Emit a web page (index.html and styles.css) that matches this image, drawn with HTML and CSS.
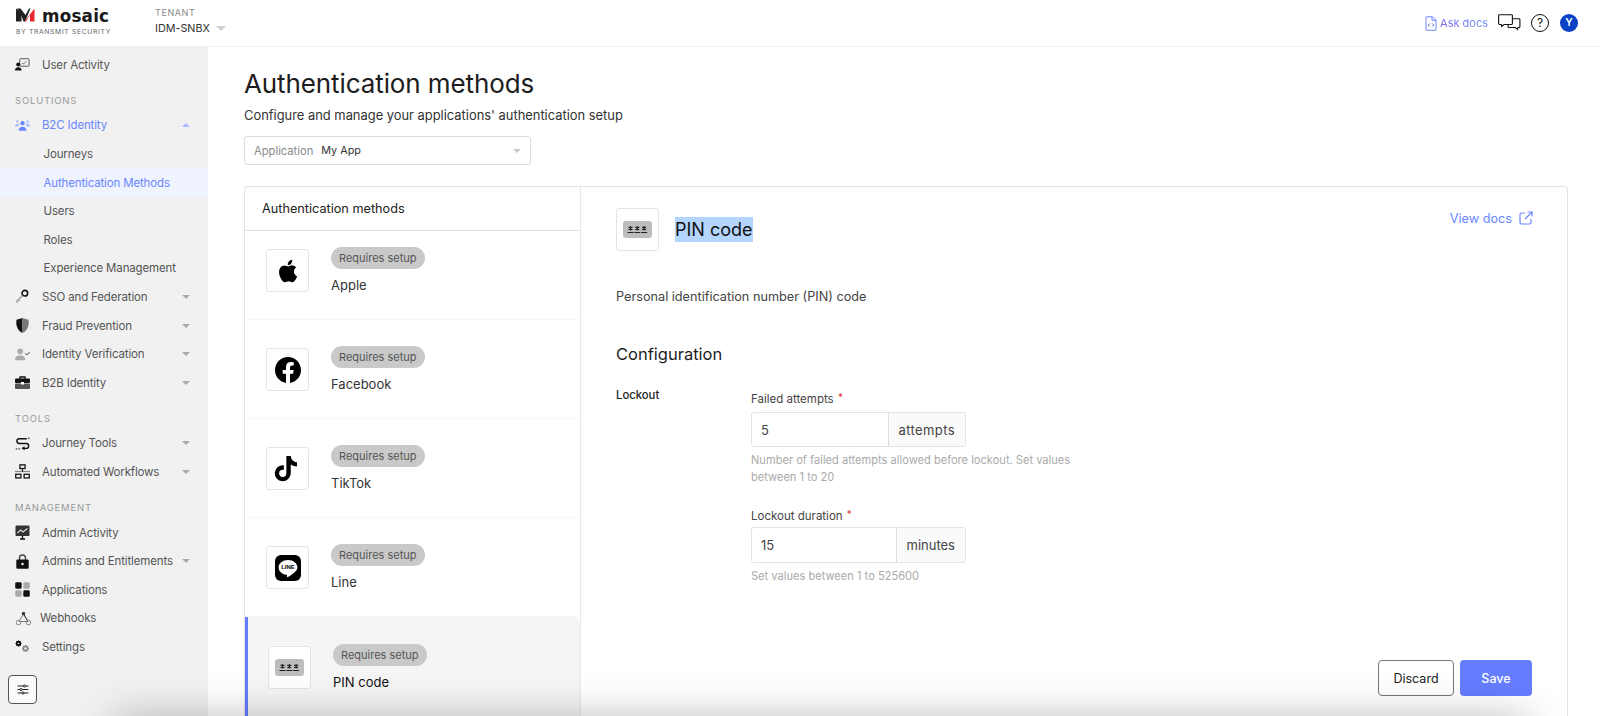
FILE: index.html
```html
<!DOCTYPE html>
<html lang="en">
<head>
<meta charset="utf-8">
<title>Authentication methods</title>
<link rel="stylesheet" href="styles.css">
</head>
<body>
<header class="topbar">
  <div class="brand">
    <svg class="brand-mark" viewBox="0 0 19 14"><path d="M0 .5l5.500 4.500v8.500H0z" fill="#222"/><path d="M1 .5h3.500l5 6.500 3.500-6.500h1.500L9 13.500H7.500L5.500 8z" fill="#222"/><path d="M18.500.5v13h-4.500V7l-4 6.500H8.500z" fill="#e8262d"/></svg>
    <div class="brand-text"><div class="brand-name">mosaic</div><div class="brand-sub">BY TRANSMIT SECURITY</div></div>
  </div>
  <div class="tenant"><div class="tenant-label">TENANT</div><div class="tenant-value">IDM-SNBX <span class="caret caret-tenant"></span></div></div>
  <div class="top-actions">
    <a class="ask"><svg class="ask-icon" viewBox="0 0 12 15"><path d="M1.500.8h6L11 4.300v9a1 1 0 0 1-1 1H2a1 1 0 0 1-1-1v-12z" fill="none" stroke="#6a86ff" stroke-width="1"/><path d="M7 .8v3.500h4" fill="none" stroke="#6a86ff"/><path d="M4.700 7.500L3.200 9l1.500 1.500M7.300 7.500L8.800 9l-1.500 1.500" fill="none" stroke="#4a5cd8" stroke-width=".9"/></svg><span class="ask-text">Ask docs</span></a>
    <svg class="chat-icon" viewBox="0 0 23 18"><path d="M1.500.7h12a.9.9 0 0 1 .9.9v8a.9.9 0 0 1-.9.9H6l-2.200 2-.5-2H1.500a.9.9 0 0 1-.9-.9v-8a.9.9 0 0 1 .9-.9z" fill="#fff" stroke="#111" stroke-width="1.100"/><path d="M15 4.700h6a.9.9 0 0 1 .9.9v7a.9.9 0 0 1-.9.9h-1l-.4 2-2.300-2H11a.9.9 0 0 1-.9-.9v-2" fill="none" stroke="#111" stroke-width="1.100"/></svg>
    <div class="help">?</div>
    <div class="avatar">Y</div>
  </div>
</header>
<div class="shell">
  <nav class="sidebar">
    <a class="nav-row"><span class="ni"><svg viewBox="0 0 16 14"><rect x="5" y=".8" width="10" height="8" rx=".8" fill="none" stroke="#444" stroke-width=".9"/><path d="M7.500 5.500l1.500 1 3-3" fill="none" stroke="#444" stroke-width=".8"/><circle cx="3.500" cy="7" r="2.200" fill="#111"/><path d="M0 13.500c0-2.500 1.500-3.500 3.500-3.500s3.500 1 3.500 3.500z" fill="#111"/></svg></span>User Activity</a>
    <div class="nav-head nav-head-first">SOLUTIONS</div>
    <a class="nav-row nav-active"><span class="ni"><svg viewBox="0 0 16 12"><g fill="#6a86ff"><circle cx="8" cy="3.500" r="2.300"/><path d="M3.800 11.500c0-3 1.800-4.300 4.200-4.300s4.200 1.300 4.200 4.300z"/></g><g fill="#a9b8ff"><circle cx="2.600" cy="1.800" r="1.300"/><circle cx="13.400" cy="1.800" r="1.300"/><path d="M0 7c0-1.800 1-2.800 2.600-2.800 1 0 1.700.3 2.100 1L3.200 7zM16 7c0-1.800-1-2.800-2.600-2.800-1 0-1.700.3-2.100 1L12.800 7z"/></g></svg></span>B2C Identity<span class="caret caret-up"></span></a>
    <a class="nav-sub">Journeys</a>
    <a class="nav-sub nav-sub-active">Authentication Methods</a>
    <a class="nav-sub">Users</a>
    <a class="nav-sub">Roles</a>
    <a class="nav-sub">Experience Management</a>
    <a class="nav-row"><span class="ni"><svg viewBox="0 0 16 16"><circle cx="10.500" cy="4.500" r="3" fill="none" stroke="#111" stroke-width="1.700"/><path d="M8 7L1.500 13.500M3.500 11.500l1.500 1.500M1.500 13.500l1.200 1.200" fill="none" stroke="#aaa" stroke-width="1.700"/></svg></span>SSO and Federation<span class="caret"></span></a>
    <a class="nav-row"><span class="ni"><svg viewBox="0 0 14 15"><path d="M7 0L1 1.800C.2 7 1.500 12.500 7 15z" fill="#111"/><path d="M7 0l6 1.800C13.800 7 12.500 12.500 7 15z" fill="#777"/></svg></span>Fraud Prevention<span class="caret"></span></a>
    <a class="nav-row"><span class="ni"><svg viewBox="0 0 16 13"><circle cx="5.500" cy="3.200" r="3" fill="#aaa"/><path d="M0 12.500c0-3.500 2.500-5 5.500-5s5.500 1.500 5.500 5z" fill="#aaa"/><path d="M11 5.500l1.500 1.500L15.500 4" fill="none" stroke="#222" stroke-width="1"/></svg></span>Identity Verification<span class="caret"></span></a>
    <a class="nav-row"><span class="ni"><svg viewBox="0 0 15 13"><path d="M5 3V1h5v2" fill="none" stroke="#111" stroke-width="1.300"/><rect x="0" y="2.500" width="15" height="4.500" rx="1" fill="#111"/><rect x="0" y="7.500" width="15" height="5.500" rx="1" fill="#555"/><rect x="6" y="6" width="3" height="2.500" fill="#fff"/></svg></span>B2B Identity<span class="caret"></span></a>
    <div class="nav-head">TOOLS</div>
    <a class="nav-row"><span class="ni"><svg viewBox="0 0 14 13"><path d="M11 2H4a2.200 2.200 0 0 0 0 4.500h6.500a2.200 2.200 0 0 1 0 4.500H7" fill="none" stroke="#111" stroke-width="1.300"/><path d="M9 9.500L7 11l2 1.500" fill="none" stroke="#111" stroke-width="1"/><circle cx="12.800" cy="1.500" r="1" fill="#888"/><circle cx="1.500" cy="11.500" r="1" fill="#888"/><circle cx="4" cy="11.500" r="1" fill="#888"/></svg></span>Journey Tools<span class="caret"></span></a>
    <a class="nav-row"><span class="ni"><svg viewBox="0 0 14 14"><g fill="none" stroke="#111" stroke-width="1.200"><rect x="4.600" y=".8" width="4.800" height="3.400"/><rect x=".7" y="9.600" width="4.800" height="3.400"/><rect x="8.500" y="9.600" width="4.800" height="3.400"/></g><path d="M0 7h14" stroke="#888" stroke-width="1.200"/><path d="M7 4.200v3" stroke="#111"/></svg></span>Automated Workflows<span class="caret"></span></a>
    <div class="nav-head">MANAGEMENT</div>
    <a class="nav-row"><span class="ni"><svg viewBox="0 0 15 15"><rect x=".5" y=".5" width="14" height="10.500" rx="1" fill="#333"/><path d="M2.500 8l3-3 2.500 2 4.500-3.500" fill="none" stroke="#ddd" stroke-width="1.100"/><path d="M5 14h5M7.500 11v3" stroke="#111" stroke-width="1.300"/></svg></span>Admin Activity</a>
    <a class="nav-row"><span class="ni"><svg viewBox="0 0 13 15"><path d="M3.500 6.500V4a3 3 0 0 1 6 0v2.500" fill="none" stroke="#444" stroke-width="1.400"/><rect x=".3" y="5.500" width="12.400" height="9.200" rx="1.300" fill="#111"/><circle cx="6.500" cy="10" r="1.200" fill="#fff"/></svg></span>Admins and Entitlements<span class="caret"></span></a>
    <a class="nav-row"><span class="ni"><svg viewBox="0 0 13 13"><rect x=".2" y=".2" width="5.600" height="5.600" rx="1.200" fill="#111"/><rect x="7.200" y=".2" width="5.600" height="5.600" rx="1" fill="#aaa"/><rect x=".2" y="7.200" width="5.600" height="5.600" rx="1" fill="#aaa"/><rect x="7.200" y="7.200" width="5.600" height="5.600" rx="1.200" fill="#111"/></svg></span>Applications</a>
    <a class="nav-row nav-webhooks"><span class="ni ni-wide"><svg viewBox="0 0 16 15"><path d="M8 3L3.500 10.500h9" fill="none" stroke="#777" stroke-width="1"/><path d="M8 3l4.500 7.500" fill="none" stroke="#111" stroke-width="1"/><circle cx="8" cy="2.500" r="1.700" fill="#333"/><circle cx="3" cy="11.500" r="2.300" fill="none" stroke="#888"/><circle cx="13" cy="11.500" r="2.300" fill="none" stroke="#888"/></svg></span>Webhooks</a>
    <a class="nav-row"><span class="ni"><svg viewBox="0 0 15 12"><circle cx="3.500" cy="3" r="1.700" fill="#fff" stroke="#111" stroke-width="1.900"/><g stroke="#111" stroke-width="1.200"><path d="M3.500 0v6M.5 3h6M1.400 .9l4.200 4.200M5.600 .9L1.400 5.100"/></g><circle cx="3.500" cy="3" r=".8" fill="#f1f1f1"/><circle cx="10.500" cy="8" r="2.100" fill="none" stroke="#888" stroke-width="1.700"/><g stroke="#888" stroke-width="1.100"><path d="M10.500 4.500v7M7 8h7M8 5.500l5 5M13 5.500l-5 5"/></g><circle cx="10.500" cy="8" r="1.200" fill="#f1f1f1"/></svg></span>Settings</a>
    <button class="tune" type="button" aria-label="Preferences"><svg viewBox="0 0 12 11"><g stroke="#222" stroke-width="1" fill="none"><path d="M.5 2h11M.5 5.500h11M.5 9h11"/></g><g fill="#fff" stroke="#222" stroke-width="1"><circle cx="7.500" cy="2" r="1.100"/><circle cx="4" cy="5.500" r="1.100"/><circle cx="6" cy="9" r="1.100"/></g></svg></button>
  </nav>
  <main class="main">
    <h1 class="page-title">Authentication methods</h1>
    <p class="page-sub">Configure and manage your applications' authentication setup</p>
    <div class="app-select"><span class="app-label">Application</span><span class="app-value">My App</span><span class="caret caret-select"></span></div>
    <section class="card">
      <aside class="methods">
        <div class="methods-head">Authentication methods</div>
        <div class="method method-first">
          <div class="icon-box"><svg class="logo-apple" viewBox="0 0 24 24"><path fill="#000" d="M17.050 12.500c0-2.300 1.900-3.400 2-3.500-1.100-1.600-2.800-1.800-3.400-1.800-1.400-.2-2.800.9-3.500.9s-1.900-.8-3.100-.8c-1.600 0-3.100.9-3.900 2.400-1.700 2.900-.4 7.200 1.200 9.500.8 1.200 1.800 2.400 3 2.400 1.200-.1 1.700-.8 3.100-.8s1.900.8 3.200.8c1.300 0 2.100-1.200 2.900-2.300.9-1.300 1.300-2.600 1.300-2.700 0-.1-2.700-1-2.800-4.100zM14.700 5.500c.7-.8 1.100-1.900 1-3.100-1 0-2.200.7-2.900 1.500-.6.700-1.200 1.900-1 3 1.100.1 2.200-.6 2.900-1.400z"/></svg></div>
          <div class="method-text"><span class="badge">Requires setup</span><div class="method-name">Apple</div></div>
        </div>
        <div class="method">
          <div class="icon-box"><svg class="logo-26" viewBox="0 0 24 24"><path fill="#000" d="M24 12.070C24 5.400 18.630 0 12 0S0 5.400 0 12.070c0 6.030 4.390 11.020 10.130 11.930v-8.440H7.080v-3.490h3.050V9.410c0-3.020 1.790-4.690 4.530-4.690 1.310 0 2.680.24 2.680.24v2.960h-1.510c-1.490 0-1.960.93-1.960 1.880v2.270h3.330l-.53 3.490h-2.800V24C19.610 23.090 24 18.100 24 12.070z"/></svg></div>
          <div class="method-text"><span class="badge">Requires setup</span><div class="method-name">Facebook</div></div>
        </div>
        <div class="method">
          <div class="icon-box"><svg class="logo-tiktok" viewBox="0 0 24 24"><path fill="#000" d="M19.300 6.500a5.200 5.200 0 0 1-3-1A5.200 5.200 0 0 1 14.200 1.500h-3.500v13.900a2.900 2.900 0 1 1-2.900-2.900c.3 0 .6 0 .9.100V9a6.400 6.400 0 1 0 5.500 6.400V8.300a8.600 8.600 0 0 0 5 1.600V6.500z"/></svg></div>
          <div class="method-text"><span class="badge">Requires setup</span><div class="method-name">TikTok</div></div>
        </div>
        <div class="method">
          <div class="icon-box"><svg class="logo-26" viewBox="0 0 26 26"><rect width="26" height="26" rx="6" fill="#000"/><path fill="#fff" d="M13 5c-5.200 0-9.400 3.300-9.400 7.400 0 3.700 3.300 6.800 7.800 7.300.9.200.7.700.5 1.800 0 .4-.2 1 .8.600 1.200-.5 5.700-3.400 7.400-5.400 1.500-1.400 2.300-2.800 2.300-4.300C22.400 8.300 18.200 5 13 5z"/><text class="line-text" x="13" y="14.400">LINE</text></svg></div>
          <div class="method-text"><span class="badge">Requires setup</span><div class="method-name">Line</div></div>
        </div>
        <div class="method method-active">
          <div class="icon-box"><svg class="pin-icon" viewBox="0 0 29 17"><rect width="29" height="17" rx="3" fill="#bdbdbd"/><g stroke="#222" fill="none"><path d="M4.500 11.500h6M11.300 11.500h6M18.100 11.500h6" stroke-width="1.100"/><path d="M7.500 5v4.500M5.500 6l4 2.500M9.500 6l-4 2.500M14.300 5v4.500M12.300 6l4 2.500M16.300 6l-4 2.500M21.100 5v4.500M19.100 6l4 2.500M23.100 6l-4 2.500" stroke-width="1.100"/></g></svg></div>
          <div class="method-text"><span class="badge">Requires setup</span><div class="method-name">PIN code</div></div>
        </div>
      </aside>
      <div class="detail">
        <div class="detail-head">
          <div class="icon-box"><svg class="pin-icon" viewBox="0 0 29 17"><rect width="29" height="17" rx="3" fill="#bdbdbd"/><g stroke="#222" fill="none"><path d="M4.500 11.500h6M11.300 11.500h6M18.100 11.500h6" stroke-width="1.100"/><path d="M7.500 5v4.500M5.500 6l4 2.500M9.500 6l-4 2.500M14.300 5v4.500M12.300 6l4 2.500M16.300 6l-4 2.500M21.100 5v4.500M19.100 6l4 2.500M23.100 6l-4 2.500" stroke-width="1.100"/></g></svg></div>
          <h2 class="detail-title"><span class="selected">PIN code</span></h2>
          <a class="view-docs">View docs<svg class="ext-icon" viewBox="0 0 14 14"><path d="M6 2H2.500A1.500 1.500 0 0 0 1 3.500v8A1.500 1.500 0 0 0 2.500 13h8a1.500 1.500 0 0 0 1.500-1.500V8M6 8l7-7M8.500 1H13v4.500" fill="none" stroke="#6a86ff" stroke-width="1.200"/></svg></a>
        </div>
        <p class="detail-desc">Personal identification number (PIN) code</p>
        <h3 class="config-title">Configuration</h3>
        <div class="config-row">
          <div class="config-label">Lockout</div>
          <div class="fields">
            <div class="field">
              <label class="field-label">Failed attempts <span class="req">*</span></label>
              <div class="input-group"><span class="input-value">5</span><span class="addon addon-wide">attempts</span></div>
              <p class="hint">Number of failed attempts allowed before lockout. Set values between 1 to 20</p>
            </div>
            <div class="field field-second">
              <label class="field-label">Lockout duration <span class="req">*</span></label>
              <div class="input-group"><span class="input-value">15</span><span class="addon">minutes</span></div>
              <p class="hint">Set values between 1 to 525600</p>
            </div>
          </div>
        </div>
        <div class="actions"><button class="btn btn-ghost" type="button">Discard</button><button class="btn btn-primary" type="button">Save</button></div>
      </div>
    </section>
  </main>
</div>
<div class="bottom-fade"><div class="bottom-fade-box"></div></div>
</body>
</html>
```
FILE: styles.css
```css
* { box-sizing: border-box; }
html, body { margin: 0; height: 716px; overflow: hidden; }
body { font-family: Inter, "Noto Sans", sans-serif; color: #222; background: #fff; position: relative; }
a { display: flex; align-items: center; }
p, h1, h2, h3 { margin: 0; font-weight: 400; }

.topbar { height: 47px; display: flex; align-items: center; border-bottom: 1px solid #efefef; padding-left: 16px; background: #fff; }
.brand { display: flex; align-items: flex-start; width: 139px; margin-top: -3px; position: relative; }
.brand-mark { width: 19px; height: 14px; position: absolute; left: 0; top: 0; }
.brand-text { width: 95px; }
.brand-name { font-family: "DejaVu Sans", sans-serif; font-weight: 700; font-size: 16.800px; line-height: 16px; margin-left: 26px; color: #1a1a1a; letter-spacing: .2px; }
.brand-sub { font-size: 6.800px; line-height: 9px; margin-top: 3px; color: #666; letter-spacing: .65px; white-space: nowrap; font-weight: 400; }
.tenant { margin-top: -3px; }
.tenant-label { font-size: 9px; line-height: 11px; color: #8a8a8a; letter-spacing: .6px; }
.tenant-value { font-size: 10.800px; line-height: 17px; margin-top: 2px; color: #333; display: flex; align-items: center; }
.caret { display: inline-block; width: 0; height: 0; border-left: 4px solid transparent; border-right: 4px solid transparent; border-top: 4px solid #aaa; margin-left: auto; }
.caret-tenant { margin-left: 6px; border-left-width: 5px; border-right-width: 5px; border-top-width: 5px; border-top-color: #d0d0d0; }
.caret-up { border-top: 0; border-bottom: 4px solid #a9b8ff; }
.caret-select { border-top-color: #c8c8c8; }
.top-actions { margin-left: auto; display: flex; align-items: center; padding-right: 22px; }
.ask { font-size: 11px; color: #6a86ff; gap: 3px; margin-right: 10px; }
.ask-text { background: linear-gradient(90deg, #7a62ee, #6a92ff); -webkit-background-clip: text; background-clip: text; color: transparent; }
.ask-icon { width: 12px; height: 15px; }
.chat-icon { width: 23px; height: 18px; margin-right: 10px; }
.help { width: 18px; height: 18px; border: 1.200px solid #111; border-radius: 50%; font-size: 12px; line-height: 16px; text-align: center; color: #111; margin-right: 11px; }
.avatar { width: 18px; height: 18px; border-radius: 50%; background: #0a41c4; color: #fff; font-size: 10.500px; font-weight: 600; line-height: 18px; text-align: center; }

.shell { display: flex; height: 669px; overflow: hidden; }
.sidebar { width: 208px; background: #f1f1f1; padding: 3.500px 18px 0 15px; flex: none; }
.nav-row { height: 28.600px; font-size: 11.500px; letter-spacing: -.15px; color: #555; white-space: nowrap; }
.ni { width: 27px; flex: none; display: flex; align-items: center; }
.ni svg { width: 15px; height: 15px; }
.ni-wide { width: 25px; }
.ni-wide svg { width: 17px; }
.nav-active { color: #6a86ff; }
.nav-head { font-size: 9.500px; line-height: 12px; color: #9a9a9a; letter-spacing: .8px; margin: 16px 0 0; height: 16px; }
.nav-head-first { margin-top: 16px; height: 16px; }
.nav-sub { height: 28.600px; font-size: 11.500px; letter-spacing: -.15px; color: #555; margin: 0 -18px 0 -15px; padding-left: 43.500px; }
.nav-sub-active { color: #6a86ff; background: #eff3fe; }
.tune { display: flex; align-items: center; justify-content: center; width: 29px; height: 29px; margin: 13.500px 0 0 -7px; padding: 0; border: 1px solid #555; border-radius: 4px; background: #fafafa; }
.tune svg { width: 12px; height: 11px; }

.main { flex: 1; padding: 22px 32px 0 36px; min-width: 0; }
.page-title { font-size: 26px; line-height: 30px; color: #1d1d1d; letter-spacing: -.1px; }
.page-sub { font-size: 12.900px; line-height: 18px; margin-top: 8px; color: #333; }
.app-select { width: 287px; height: 29px; margin-top: 11px; border: 1px solid #dedede; border-radius: 3px; display: flex; align-items: center; padding: 0 9px; font-size: 11.200px; }
.app-label { color: #8a8a8a; margin-right: 8px; }
.app-value { color: #333; font-size: 10.800px; }

.card { margin-top: 21px; height: 530px; border: 1px solid #e3e3e3; border-bottom: 0; border-radius: 4px 4px 0 0; display: flex; }
.methods { width: 336px; flex: none; border-right: 1px solid #e8e8e8; }
.methods-head { height: 44px; border-bottom: 1px solid #e2e2e2; padding-left: 17px; display: flex; align-items: center; font-size: 12.700px; color: #222; }
.method { height: 99px; padding: 28px 0 0 21px; display: flex; border-bottom: 1px solid #f6f6f6; }
.method-first { height: 89px; padding-top: 18px; }
.icon-box { width: 43px; height: 43px; border: 1px solid #e4e4e4; border-radius: 3px; background: #fff; display: flex; align-items: center; justify-content: center; flex: none; }
.logo-apple { width: 28px; height: 28px; }
.logo-tiktok { width: 30px; height: 30px; }
.logo-26 { width: 26px; height: 26px; }
.pin-icon { width: 29px; height: 17px; }
.line-text { font-family: "Liberation Sans", sans-serif; font-size: 6px; font-weight: 700; text-anchor: middle; fill: #000; }
.method-text { margin-left: 22px; margin-top: -3px; }
.badge { display: inline-block; height: 22px; line-height: 22px; padding: 0 8px; border-radius: 11px; background: #c9c9c9; color: #555; font-size: 11px; }
.method-name { font-size: 13px; line-height: 18px; margin-top: 7px; color: #333; }
.method-active { height: 100px; background: #f5f5f5; border-left: 3px solid #657dff; border-bottom: 0; padding: 29px 0 0 20px; border-radius: 0 8px 0 0; }
.method-active .method-name { color: #111; }

.detail { flex: 1; position: relative; padding: 21px 34px 0 35px; min-width: 0; }
.detail-head { display: flex; align-items: center; }
.detail-title { font-size: 18px; margin-left: 16px; line-height: 25px; color: #111; }
.selected { background: #b4d5fe; display: inline-block; }
.view-docs { margin-left: auto; margin-top: -23px; font-size: 12.700px; color: #6a86ff; gap: 7px; }
.ext-icon { width: 14px; height: 14px; }
.detail-desc { font-size: 12.700px; line-height: 18px; margin-top: 37px; color: #444; }
.config-title { font-size: 16.500px; line-height: 22px; margin-top: 37px; color: #1d1d1d; }
.config-row { display: flex; margin-top: 23px; }
.config-label { width: 135px; font-size: 11.300px; font-weight: 500; color: #222; line-height: 14px; }
.fields { width: 330px; padding-top: 3px; }
.field-label { display: block; font-size: 11.500px; line-height: 14px; color: #444; margin-top: -1px; }
.req { color: #e53935; font-size: 10px; vertical-align: 2px; margin-left: 1px; }
.input-group { width: 215px; height: 35px; margin-top: 6px; border: 1px solid #e3e3e3; border-radius: 3px; display: flex; overflow: hidden; font-size: 13px; color: #444; }
.input-value { flex: 1; padding-left: 9px; display: flex; align-items: center; }
.addon { padding: 0 10px; background: #fafafa; border-left: 1px solid #ddd; display: flex; align-items: center; }
.addon-wide { letter-spacing: .4px; }
.hint { font-size: 11.100px; line-height: 17px; color: #aaa; margin-top: 5px; }
.field-second { margin-top: 22px; }
.field-second .input-group { margin-top: 4px; height: 36px; }
.actions { position: absolute; right: 35px; top: 473px; display: flex; gap: 6px; }
.btn { height: 36px; font-family: inherit; font-size: 12.500px; border-radius: 4px; }
.btn-ghost { width: 76px; background: #fff; border: 1px solid #777; color: #222; }
.btn-primary { width: 72px; background: #657dff; border: 0; color: #fff; font-weight: 500; }

.bottom-fade { position: absolute; left: 0; right: 0; bottom: 0; height: 70px; overflow: hidden; pointer-events: none; }
.bottom-fade-box { position: absolute; left: 130px; right: 90px; top: 90px; height: 20px; box-shadow: 0 0 44px 16px rgba(0,0,0,.3); }
```
